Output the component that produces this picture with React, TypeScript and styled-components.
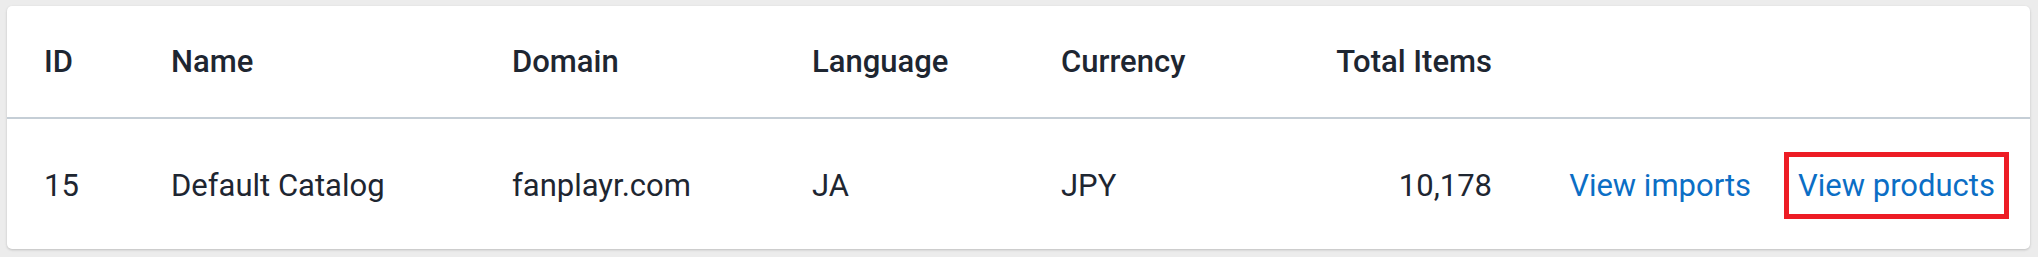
import React from "react";
import styled, { createGlobalStyle } from "styled-components";

const GlobalStyle = createGlobalStyle`
  html, body {
    margin: 0;
    padding: 0;
    background: #ececec;
  }
  body {
    font-family: Roboto, "Liberation Sans", Arial, sans-serif;
  }
`;

const Page = styled.div`
  padding: 6px 8px 8px 7px;
`;

const Card = styled.div`
  background: #ffffff;
  border-radius: 5px;
  box-shadow: 0 1px 3px rgba(0, 0, 0, 0.12), 0 1px 2px rgba(0, 0, 0, 0.08);
  overflow: hidden;
`;

const Table = styled.table`
  width: 100%;
  border-collapse: collapse;
  table-layout: fixed;
  font-size: 31px;
  color: #1e2631;
`;

const HeadRow = styled.tr`
  height: 112px;
  border-bottom: 2px solid #c5ced6;
`;

const BodyRow = styled.tr`
  height: 131px;
`;

const Th = styled.th<{ $align?: "left" | "right" }>`
  font-weight: 500;
  text-align: ${(p) => p.$align ?? "left"};
  padding: 0 18px;
  white-space: nowrap;
  &:first-child {
    padding-left: 37px;
  }
`;

const Td = styled.td<{ $align?: "left" | "right" }>`
  font-weight: 400;
  text-align: ${(p) => p.$align ?? "left"};
  padding: 2px 18px 0;
  white-space: nowrap;
  &:first-child {
    padding-left: 37px;
  }
`;

const ActionsCell = styled.td`
  padding: 2px 26px 0 0;
`;

const Actions = styled.div`
  display: flex;
  justify-content: flex-end;
  align-items: center;
  gap: 29px;
`;

const Link = styled.a<{ $highlight?: boolean }>`
  color: #0b6ec5;
  text-decoration: none;
  padding: 8px 9px;
  line-height: 41px;
  outline: ${(p) => (p.$highlight ? "5px solid #ed1c24" : "none")};
  cursor: pointer;
`;

const columns = [146, 341, 300, 249, 257, 210];

export default function App() {
  return (
    <>
      <GlobalStyle />
      <Page>
        <Card>
          <Table>
            <colgroup>
              {columns.map((w, i) => (
                <col key={i} style={{ width: w }} />
              ))}
              <col />
            </colgroup>
            <thead>
              <HeadRow>
                <Th>ID</Th>
                <Th>Name</Th>
                <Th>Domain</Th>
                <Th>Language</Th>
                <Th>Currency</Th>
                <Th $align="right">Total Items</Th>
                <Th />
              </HeadRow>
            </thead>
            <tbody>
              <BodyRow>
                <Td>15</Td>
                <Td>Default Catalog</Td>
                <Td>fanplayr.com</Td>
                <Td>JA</Td>
                <Td>JPY</Td>
                <Td $align="right">10,178</Td>
                <ActionsCell>
                  <Actions>
                    <Link>View imports</Link>
                    <Link $highlight>View products</Link>
                  </Actions>
                </ActionsCell>
              </BodyRow>
            </tbody>
          </Table>
        </Card>
      </Page>
    </>
  );
}
